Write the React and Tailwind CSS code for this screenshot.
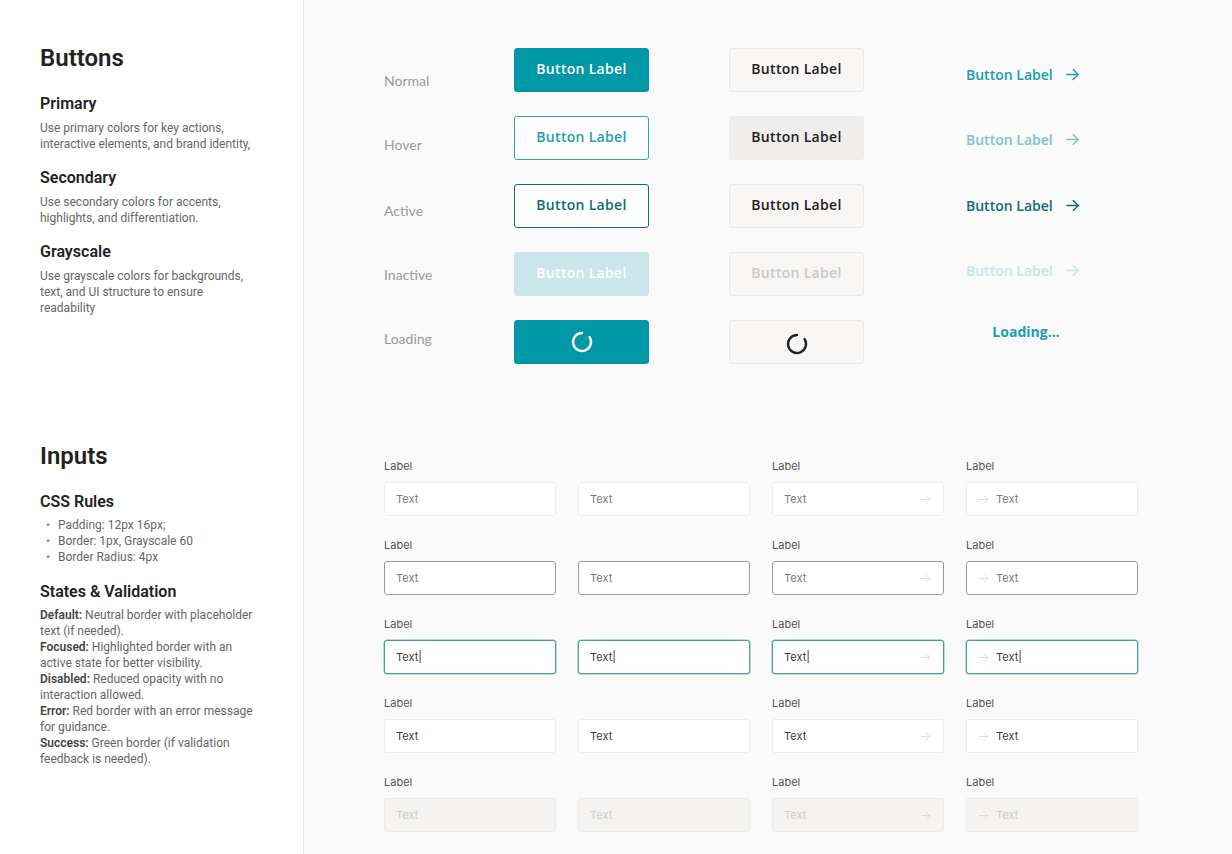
import React from 'react';

const ArrowIcon = ({ className = '', size = 16, stroke = 2 }) => (
  <svg width={size} height={size} viewBox="0 0 24 24" fill="none" stroke="currentColor" strokeWidth={stroke} strokeLinecap="round" strokeLinejoin="round" className={className}>
    <path d="M4 12h16" />
    <path d="M13 5l7 7-7 7" />
  </svg>
);

const Spinner = ({ className = '' }) => (
  <svg width="26" height="26" viewBox="0 0 24 24" fill="none" className={className}>
    <path d="M19 7.5A8.3 8.3 0 1 1 12 3.7" stroke="currentColor" strokeWidth="2.2" strokeLinecap="round" />
  </svg>
);

const btnBase = 'h-11 w-[135px] rounded-[3px] flex items-center justify-center text-[14px] font-semibold tracking-[0.3px]';

const primaryButtons = [
  { cls: 'bg-[#0097a7] text-white border border-[#0097a7]', label: 'Button Label' },
  { cls: 'bg-white text-[#1c9fad] border border-[#2aa7b4]', label: 'Button Label' },
  { cls: 'bg-white text-[#0d6d76] border border-[#0f6f78]', label: 'Button Label' },
  { cls: 'bg-[#cae6ea] text-white border border-[#cae6ea]', label: 'Button Label' },
  { cls: 'bg-[#0097a7] text-white border border-[#0097a7]', spinner: true },
];

const secondaryButtons = [
  { cls: 'bg-[#f7f6f5] text-[#222] border border-[#ebeae9]', label: 'Button Label' },
  { cls: 'bg-[#efeeed] text-[#222] border border-[#efeeed]', label: 'Button Label' },
  { cls: 'bg-[#f7f6f5] text-[#222] border border-[#ebeae9]', label: 'Button Label' },
  { cls: 'bg-[#f7f6f5] text-[#c9c9c9] border border-[#ebeae9]', label: 'Button Label' },
  { cls: 'bg-[#f7f6f5] text-[#222] border border-[#ebeae9]', spinner: true },
];

const tertiary = [
  { color: 'text-[#1a9fae]', h: 'h-[65px]' },
  { color: 'text-[#7cc5cd]', h: 'h-[66px]' },
  { color: 'text-[#0e6e77]', h: 'h-[65px]' },
  { color: 'text-[#c6e6ea]', h: 'h-[61px]' },
];

const states = [
  { label: 'Normal', h: 'h-16' },
  { label: 'Hover', h: 'h-[66px]' },
  { label: 'Active', h: 'h-16' },
  { label: 'Inactive', h: 'h-16' },
  { label: 'Loading', h: 'h-5' },
];

const inputRows = [
  { box: 'bg-white border-[#ededed]', text: 'text-[#7a7a7a]', value: 'Text' },
  { box: 'bg-white border-[#9a9a9a]', text: 'text-[#7a7a7a]', value: 'Text' },
  { box: 'bg-white border-[#4f9ea6] shadow-[0_0_0_0.5px_#7fbcc2]', text: 'text-[#3a3a3a]', value: 'Text', caret: true },
  { box: 'bg-white border-[#ededed]', text: 'text-[#3a3a3a]', value: 'Text' },
  { box: 'bg-[#f4f3f2] border-[#ebebea]', text: 'text-[#cdcdcd]', value: 'Text' },
];

const InputCell = ({ row, variant, showLabel }) => (
  <div className="flex flex-col">
    <div className="h-[14px] text-[11px] leading-[14px] text-[#555]">{showLabel ? 'Label' : ''}</div>
    <div className={`mt-[9px] h-[34px] rounded-[3px] border flex items-center text-[11px] ${row.box} ${variant === 'left' ? 'pl-[10px]' : 'pl-[11px]'} pr-[11px]`}>
      {variant === 'left' && <ArrowIcon size={13} stroke={1.5} className="text-[#d6d6d6] mr-[6px]" />}
      <span className={`${row.text} flex-1`}>
        {row.value}
        {row.caret && <span className="text-[#333]">|</span>}
      </span>
      {variant === 'right' && <ArrowIcon size={13} stroke={1.5} className="text-[#d6d6d6]" />}
    </div>
  </div>
);

const Block = ({ title, children }) => (
  <div>
    <h3 className="text-[16px] leading-[20px] font-semibold text-[#222]">{title}</h3>
    <div className="mt-[6px] text-[12px] leading-[16px] text-[#666]">{children}</div>
  </div>
);

export default function App() {
  return (
    <div className="h-[854px] flex overflow-hidden" style={{ fontFamily: 'Roboto, "Liberation Sans", sans-serif' }}>
      <aside className="w-[304px] shrink-0 bg-white border-r border-[#e6e6e6] pl-10 pt-[42px]">
        <div className="w-[216px]">
          <h2 className="text-[24px] leading-[32px] font-semibold text-[#222]">Buttons</h2>
          <div className="mt-5 flex flex-col gap-4">
            <Block title="Primary">Use primary colors for key actions, interactive elements, and brand identity,</Block>
            <Block title="Secondary">Use secondary colors for accents, highlights, and differentiation.</Block>
            <Block title="Grayscale">Use grayscale colors for backgrounds, text, and UI structure to ensure readability</Block>
          </div>

          <h2 className="mt-[124px] text-[24px] leading-[32px] font-semibold text-[#222]">Inputs</h2>
          <div className="mt-5">
            <h3 className="text-[16px] leading-[20px] font-semibold text-[#222]">CSS Rules</h3>
            <ul className="mt-[5px] text-[12px] leading-[16px] text-[#666]">
              {['Padding: 12px 16px;', 'Border: 1px, Grayscale 60', 'Border Radius: 4px'].map((t) => (
                <li key={t} className="flex pl-[6px]">
                  <span className="w-[12px] text-[#888]">•</span>
                  <span>{t}</span>
                </li>
              ))}
            </ul>
          </div>
          <div className="mt-[17px]">
            <h3 className="text-[16px] leading-[20px] font-semibold text-[#222]">States &amp; Validation</h3>
            <div className="mt-[5px] text-[12px] leading-[16px] text-[#666] w-[222px]">
              <p><b className="font-semibold text-[#444]">Default:</b> Neutral border with placeholder text (if needed).</p>
              <p><b className="font-semibold text-[#444]">Focused:</b> Highlighted border with an active state for better visibility.</p>
              <p><b className="font-semibold text-[#444]">Disabled:</b> Reduced opacity with no interaction allowed.</p>
              <p><b className="font-semibold text-[#444]">Error:</b> Red border with an error message for guidance.</p>
              <p><b className="font-semibold text-[#444]">Success:</b> Green border (if validation feedback is needed).</p>
            </div>
          </div>
        </div>
      </aside>

      <main className="flex-1 bg-[#fafafa] pl-[80px]">
        <section className="flex items-start pt-[48px]" style={{ fontFamily: '"Open Sans", "Liberation Sans", sans-serif' }}>
          <div className="w-[130px] pt-[23px] flex flex-col" style={{ fontFamily: 'Lato, "Liberation Sans", sans-serif' }}>
            {states.map((s) => (
              <div key={s.label} className={`${s.h} text-[14px] leading-5 text-[#9b9b9b]`}>{s.label}</div>
            ))}
          </div>

          <div className="flex flex-col gap-6">
            {primaryButtons.map((b, i) => (
              <div key={i} className={`${btnBase} ${b.cls} ${b.spinner ? '' : 'pb-[3px]'}`}>
                {b.spinner ? <Spinner className="text-white" /> : b.label}
              </div>
            ))}
          </div>

          <div className="ml-[80px] flex flex-col gap-6">
            {secondaryButtons.map((b, i) => (
              <div key={i} className={`${btnBase} ${b.cls} ${b.spinner ? '' : 'pb-[3px]'}`}>
                {b.spinner ? <Spinner className="text-[#222] mt-1" /> : b.label}
              </div>
            ))}
          </div>

          <div className="ml-[102px] w-[120px] pt-4 flex flex-col">
            {tertiary.map((t, i) => (
              <div key={i} className={`${t.h} shrink-0`}>
                <div className={`flex items-center gap-[11px] h-5 whitespace-nowrap text-[14px] font-semibold ${t.color}`}>
                  <span>Button Label</span>
                  <ArrowIcon size={17} stroke={2} />
                </div>
              </div>
            ))}
            <div className="h-5 text-center whitespace-nowrap text-[14px] font-bold text-[#1a9fae]">Loading...</div>
          </div>
        </section>

        <section className="mt-[95px] w-[754px] grid grid-cols-4 gap-x-[22px] gap-y-[22px]" style={{ fontFamily: 'Inter, "Liberation Sans", sans-serif' }}>
          {inputRows.map((row, r) => (
            <React.Fragment key={r}>
              <InputCell row={row} variant="plain" showLabel />
              <InputCell row={row} variant="plain" showLabel={false} />
              <InputCell row={row} variant="right" showLabel />
              <InputCell row={row} variant="left" showLabel />
            </React.Fragment>
          ))}
        </section>
      </main>
    </div>
  );
}
